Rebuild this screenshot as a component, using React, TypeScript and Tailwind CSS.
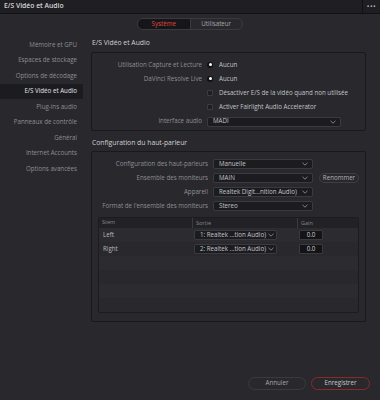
const sidebarItems = [
  'Mémoire et GPU',
  'Espaces de stockage',
  'Options de décodage',
  'E/S Vidéo et Audio',
  'Plug-ins audio',
  'Panneaux de contrôle',
  'Général',
  'Internet Accounts',
  'Options avancées',
];

function Chevron() {
  return (
    <svg width="6" height="4" viewBox="0 0 6 4" className="shrink-0">
      <path d="M0.5 0.8 L3 3.2 L5.5 0.8" fill="none" stroke="#9a9a9e" strokeWidth="0.8" />
    </svg>
  );
}

function Select({ value, className }: { value: string; className: string }) {
  return (
    <div
      className={`flex h-[10px] shrink-0 items-center justify-between gap-[2px] rounded-[2px] border border-[#3a3a40] bg-[#1c1c20] pl-[5px] pr-[4px] text-[#c4c4c8] ${className}`}
    >
      <span className="whitespace-nowrap">{value}</span>
      <Chevron />
    </div>
  );
}

function Label({ text }: { text: string }) {
  return <span className="flex w-[110px] shrink-0 justify-end whitespace-nowrap">{text}</span>;
}

function Radio() {
  return (
    <div className="flex h-[6px] w-[6px] items-center justify-center rounded-full bg-[#111114]">
      <div className="h-[3px] w-[3px] rounded-full bg-white" />
    </div>
  );
}

function Checkbox() {
  return <div className="h-[6px] w-[6px] rounded-[1px] border border-[#3c3c42] bg-[#1e1e22]" />;
}

export default function App() {
  return (
    <div
      className="flex h-[400px] w-[380px] flex-col bg-[#28282d] text-[6.2px] leading-none text-[#8f8f94]"
      style={{ fontFamily: '"Open Sans", "Noto Sans", sans-serif' }}
    >
      {/* title bar */}
      <div className="flex h-[14px] items-center justify-between border-b border-[#111114] bg-[#1f1f23]">
        <span className="pl-[4px] text-[6.8px] font-semibold text-[#d6d6da]">E/S Vidéo et Audio</span>
        <div className="flex h-full w-[18px] items-center justify-center border-l border-[#111114]">
          <span className="text-[7px] tracking-[0.5px] text-[#b0b0b4]">•••</span>
        </div>
      </div>

      {/* tabs */}
      <div className="flex justify-center pt-[4px]">
        <div className="flex h-[12px] w-[106px] overflow-hidden rounded-full border border-[#3a3a40]">
          <div className="flex flex-1 items-center justify-center bg-[#161619] text-[#e0463f]">Système</div>
          <div className="flex flex-1 items-center justify-center border-l border-[#3a3a40] text-[#a8a8ac]">
            Utilisateur
          </div>
        </div>
      </div>

      <div className="flex flex-1 pt-[6px]">
        {/* sidebar */}
        <div className="flex w-[83px] flex-col pt-[1px]">
          {sidebarItems.map((item) => (
            <div
              key={item}
              className={`flex h-[15.5px] items-center justify-end pr-[6px] ${
                item === 'E/S Vidéo et Audio' ? 'bg-[#1c1c20] text-[#e4e4e8]' : ''
              }`}
            >
              {item}
            </div>
          ))}
        </div>

        {/* content */}
        <div className="flex w-[283px] flex-col pl-[8px]">
          <div className="flex h-[14px] items-center pl-[1px] text-[6.8px] text-[#d2d2d6]">E/S Vidéo et Audio</div>
          <div className="mt-[2px] flex h-[79px] flex-col rounded-[2px] border border-[#19191c] pt-[5px]">
            <div className="flex h-[14px] items-center">
              <Label text="Utilisation Capture et Lecture" />
              <div className="ml-[5px] flex items-center gap-[6px]">
                <Radio />
                <span className="text-[#c4c4c8]">Aucun</span>
              </div>
            </div>
            <div className="flex h-[14px] items-center">
              <Label text="DaVinci Resolve Live" />
              <div className="ml-[5px] flex items-center gap-[6px]">
                <Radio />
                <span className="text-[#c4c4c8]">Aucun</span>
              </div>
            </div>
            <div className="flex h-[14px] items-center">
              <div className="ml-[115px] flex items-center gap-[6px]">
                <Checkbox />
                <span className="text-[#c4c4c8]">Désactiver E/S de la vidéo quand non utilisée</span>
              </div>
            </div>
            <div className="flex h-[14px] items-center">
              <div className="ml-[115px] flex items-center gap-[6px]">
                <Checkbox />
                <span className="text-[#c4c4c8]">Activer Fairlight Audio Accelerator</span>
              </div>
            </div>
            <div className="flex h-[15px] items-center">
              <Label text="Interface audio" />
              <Select value="MADI" className="ml-[5px] w-[134px]" />
            </div>
          </div>

          <div className="mt-[5px] flex h-[14px] items-center pl-[1px] text-[6.8px] text-[#d2d2d6]">
            Configuration du haut-parleur
          </div>
          <div className="mt-[1px] flex h-[171px] flex-col rounded-[2px] border border-[#19191c] px-[6px] pt-[5px]">
            <div className="flex h-[14px] items-center">
              <Label text="Configuration des haut-parleurs" />
              <Select value="Manuelle" className="ml-[5px] w-[100px]" />
            </div>
            <div className="flex h-[14px] items-center">
              <Label text="Ensemble des moniteurs" />
              <Select value="MAIN" className="ml-[5px] w-[100px]" />
              <div className="ml-[6px] flex h-[10px] w-[47px] items-center justify-center rounded-full border border-[#3e3e44] text-[#b4b4b8]">
                Renommer
              </div>
            </div>
            <div className="flex h-[14px] items-center">
              <Label text="Appareil" />
              <Select value="Realtek Digit...nition Audio)" className="ml-[5px] w-[100px]" />
            </div>
            <div className="flex h-[14px] items-center">
              <Label text="Format de l'ensemble des moniteurs" />
              <Select value="Stereo" className="ml-[5px] w-[100px]" />
            </div>

            {/* table */}
            <div className="mt-[4px] flex h-[96px] flex-col overflow-hidden rounded-[2px] border border-[#1c1c20]">
              <div className="flex h-[10px] items-center bg-[#222226] text-[5.5px] text-[#85858a]">
                <span className="w-[93px] pl-[3px]">Stem</span>
                <span className="h-full w-[105px] border-l border-[#3a3a40] pl-[3px] leading-[10px]">Sortie</span>
                <span className="h-full flex-1 border-l border-[#3a3a40] pl-[3px] leading-[10px]">Gain</span>
              </div>
              <div className="flex h-[14px] items-center bg-[#2b2b30]">
                <span className="w-[95px] pl-[4px] text-[#b8b8bc]">Left</span>
                <Select value="1: Realtek ...tion Audio)" className="w-[83px] text-[#a8a8ac]" />
                <div className="ml-[22px] flex h-[10px] w-[24px] items-center justify-center rounded-[1px] border border-[#3a3a40] bg-[#141417] text-[#d0d0d4]">
                  0.0
                </div>
              </div>
              <div className="flex h-[14px] items-center bg-[#28282d]">
                <span className="w-[95px] pl-[4px] text-[#b8b8bc]">Right</span>
                <Select value="2: Realtek ...tion Audio)" className="w-[83px] text-[#a8a8ac]" />
                <div className="ml-[22px] flex h-[10px] w-[24px] items-center justify-center rounded-[1px] border border-[#3a3a40] bg-[#141417] text-[#d0d0d4]">
                  0.0
                </div>
              </div>
              <div className="h-[14px] bg-[#2b2b30]" />
              <div className="h-[14px] bg-[#28282d]" />
              <div className="h-[14px] bg-[#2b2b30]" />
              <div className="h-[14px] bg-[#28282d]" />
              <div className="flex-1 bg-[#2b2b30]" />
            </div>
          </div>
        </div>
      </div>

      {/* footer */}
      <div className="flex justify-end gap-[5px] pb-[10px] pr-[10px]">
        <div className="flex h-[13px] w-[58px] items-center justify-center rounded-full border border-[#3a3a40] text-[#a8a8ac]">
          Annuler
        </div>
        <div className="flex h-[13px] w-[59px] items-center justify-center rounded-full border border-[#8c2a28] text-[#c8c8cc]">
          Enregistrer
        </div>
      </div>
    </div>
  );
}
